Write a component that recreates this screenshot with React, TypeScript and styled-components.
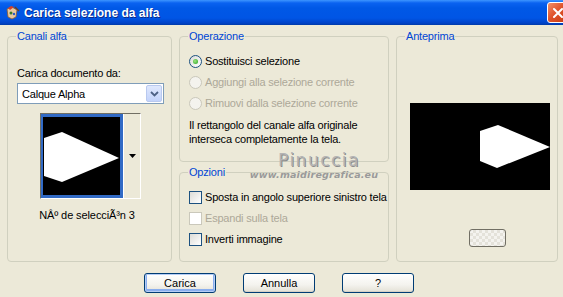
import React from 'react';
import styled, { createGlobalStyle, css } from 'styled-components';

const GlobalStyle = createGlobalStyle`
  html, body {
    margin: 0;
    padding: 0;
    background: #ece9d8;
  }
  body {
    font-family: Tahoma, "Liberation Sans", Arial, sans-serif;
    font-size: 11px;
    color: #000;
  }
`;

const Window = styled.div`
  width: 563px;
  height: 297px;
  display: flex;
  flex-direction: column;
  background: #ece9d8;
  overflow: hidden;
  position: relative;
  white-space: nowrap;
`;

const TitleBar = styled.div`
  height: 25px;
  flex: none;
  display: flex;
  align-items: center;
  padding-left: 4px;
  gap: 4px;
  background: linear-gradient(to bottom, #3d95ff 0px, #0a62f0 3px, #0058e6 8px, #0055e5 18px, #0043c8 23px, #003aa8 25px);
`;

const Title = styled.span`
  flex: 1;
  color: #fff;
  font-family: "Liberation Sans", Arial, sans-serif;
  font-weight: bold;
  font-size: 12px;
  text-shadow: 1px 1px 0 #0a2a8a;
`;

const CloseButton = styled.div`
  width: 21px;
  height: 21px;
  margin-right: -5px;
  box-sizing: border-box;
  border: 1px solid #fff;
  border-radius: 3px;
  background: linear-gradient(to bottom right, #f0906a, #e0542c 45%, #c73a10);
  display: flex;
  align-items: center;
  justify-content: center;
`;

const Body = styled.div`
  display: grid;
  grid-template-columns: 165px 210px 162px;
  column-gap: 7px;
  padding: 5px 0 0 7px;
  align-items: stretch;
`;

const MiddleColumn = styled.div`
  display: flex;
  flex-direction: column;
  gap: 4px;
`;

const Group = styled.fieldset<{ $height: number }>`
  margin: 0;
  padding: 0 8px 0 9px;
  height: ${p => p.$height}px;
  box-sizing: border-box;
  border: 1px solid #d0d0bf;
  border-radius: 4px;
  min-width: 0;
`;

const Legend = styled.legend`
  color: #0046d5;
  padding: 0 1px;
  margin-left: -1px;
  line-height: 13px;
  letter-spacing: -0.2px;
`;

const Label = styled.div`
  margin-top: 24px;
  letter-spacing: -0.2px;
  line-height: 13px;
`;

const Select = styled.div`
  margin-top: 3px;
  height: 21px;
  width: 147px;
  box-sizing: border-box;
  border: 1px solid #7f9db9;
  background: #fff;
  display: flex;
  align-items: center;
  padding: 1px;
`;

const SelectText = styled.span`
  flex: 1;
  padding-left: 3px;
  letter-spacing: -0.2px;
`;

const SelectArrow = styled.div`
  width: 16px;
  height: 17px;
  border-radius: 2px;
  background: linear-gradient(to bottom, #dfe8fd, #c3d3fb);
  border: 1px solid #b9c9ef;
  box-sizing: border-box;
  display: flex;
  align-items: center;
  justify-content: center;
`;

const ThumbWrap = styled.div`
  margin: 9px 0 0 23px;
  width: 101px;
  height: 86px;
  display: flex;
  border: 1px solid #716f64;
  border-right-color: #fff;
  border-bottom-color: #fff;
  box-sizing: border-box;
  background: #fff;
`;

const ThumbFrame = styled.div`
  width: 82px;
  height: 84px;
  box-sizing: border-box;
  border: 3px solid #316ac5;
  border-left-width: 2px;
  background: #000;
  padding: 2px 0 0 1px;
`;

const ThumbDrop = styled.div`
  flex: 1;
  background: #ece9d8;
  border-left: 1px solid #fff;
  display: flex;
  align-items: center;
  justify-content: center;
`;

const Caption = styled.div`
  margin-top: 10px;
  text-align: center;
  letter-spacing: -0.1px;
  padding-right: 6px;
`;

const OptionList = styled.div`
  display: flex;
  flex-direction: column;
  gap: 7px;
  margin-top: 11px;
`;

const Option = styled.div<{ $disabled?: boolean }>`
  display: flex;
  align-items: center;
  gap: 3px;
  height: 14px;
  letter-spacing: -0.2px;
  color: ${p => (p.$disabled ? '#aca899' : '#000')};
`;

const Radio = styled.span<{ $checked?: boolean; $disabled?: boolean }>`
  width: 13px;
  height: 13px;
  flex: none;
  box-sizing: border-box;
  border-radius: 50%;
  border: 1px solid ${p => (p.$disabled ? '#cac8bb' : '#1c5180')};
  background: ${p => (p.$disabled ? '#f4f3ee' : 'linear-gradient(135deg, #dcdcd7, #fff)')};
  display: flex;
  align-items: center;
  justify-content: center;
  ${p =>
    p.$checked &&
    css`
      &::after {
        content: '';
        width: 5px;
        height: 5px;
        border-radius: 50%;
        background: radial-gradient(circle at 40% 40%, #a0e57d, #21a121);
      }
    `}
`;

const Check = styled.span<{ $disabled?: boolean }>`
  width: 13px;
  height: 13px;
  flex: none;
  box-sizing: border-box;
  border: 1px solid ${p => (p.$disabled ? '#cac8bb' : '#1c5180')};
  background: ${p => (p.$disabled ? '#fff' : 'linear-gradient(135deg, #dcdcd7, #fff)')};
`;

const Note = styled.div`
  margin-top: 8px;
  line-height: 14px;
  letter-spacing: -0.2px;
`;

const PreviewBox = styled.div`
  margin: 60px 0 0 4px;
  width: 140px;
  height: 87px;
  background: #000;
`;

const SwatchRow = styled.div`
  display: flex;
  justify-content: center;
  margin-top: 39px;
  padding-left: 20px;
`;

const SwatchButton = styled.div`
  width: 37px;
  height: 18px;
  box-sizing: border-box;
  border: 1px solid #716f64;
  border-radius: 3px;
  background-color: #f4f3ef;
  background-image: linear-gradient(45deg, #e4e2da 25%, transparent 25%, transparent 75%, #e4e2da 75%),
    linear-gradient(45deg, #e4e2da 25%, transparent 25%, transparent 75%, #e4e2da 75%);
  background-size: 6px 6px;
  background-position: 0 0, 3px 3px;
`;

const Footer = styled.div`
  display: flex;
  justify-content: center;
  gap: 27px;
  margin-top: 11px;
  padding-right: 5px;
`;

const Button = styled.button<{ $default?: boolean }>`
  width: 72px;
  height: 20px;
  padding: 0;
  box-sizing: border-box;
  border: 1px solid #003c74;
  border-radius: 3px;
  font-family: inherit;
  font-size: 11px;
  color: #000;
  background: linear-gradient(to bottom, #fff, #f4f3ee 60%, #e3e1d6);
  box-shadow: ${p => (p.$default ? 'inset 0 0 0 1px #b5cdf5, inset 0 -1px 0 2px #8aaeee' : 'inset 0 -1px 0 #d6d0c5')};
`;

const Watermark = styled.div`
  position: absolute;
  left: 244px;
  top: 151px;
  width: 140px;
  display: flex;
  flex-direction: column;
  align-items: center;
  pointer-events: none;
`;

const WatermarkName = styled.span`
  font-family: "DejaVu Sans", sans-serif;
  font-size: 17px;
  letter-spacing: 1.5px;
  line-height: 18px;
  padding-left: 10px;
  color: #b4b4b4;
  text-shadow: 1px 1px 0 #8c8c8c;
`;

const WatermarkUrl = styled.span`
  font-family: "DejaVu Sans", sans-serif;
  font-style: italic;
  font-weight: bold;
  font-size: 9.5px;
  letter-spacing: 0.2px;
  color: #9a9a9a;
`;

const AppIcon = () => (
  <svg width="16" height="16" viewBox="0 0 16 16">
    <path d="M3 4 L8 2 L13 5 L12 12 L8 14 L4 12 Z" fill="#e8c9a0" stroke="#8a5a30" strokeWidth="0.8" />
    <path d="M4 3 L7 1 L10 2 L6 5 Z" fill="#d4402a" />
    <circle cx="7" cy="8" r="1.5" fill="#3a7a2a" />
    <circle cx="10" cy="9" r="1.2" fill="#2a5ac8" />
    <path d="M11 2 L15 6" stroke="#6a4020" strokeWidth="1.2" />
  </svg>
);

const App: React.FC = () => (
  <>
    <GlobalStyle />
    <Window>
      <TitleBar>
        <AppIcon />
        <Title>Carica selezione da alfa</Title>
        <CloseButton>
          <svg width="12" height="12" viewBox="0 0 12 12">
            <path d="M2 2 L10 10 M10 2 L2 10" stroke="#fff" strokeWidth="2" strokeLinecap="round" />
          </svg>
        </CloseButton>
      </TitleBar>
      <Body>
        <Group $height={232}>
          <Legend>Canali alfa</Legend>
          <Label>Carica documento da:</Label>
          <Select>
            <SelectText>Calque Alpha</SelectText>
            <SelectArrow>
              <svg width="9" height="6" viewBox="0 0 9 6">
                <path d="M1 1 L4.5 4.5 L8 1" fill="none" stroke="#4d6185" strokeWidth="1.8" />
              </svg>
            </SelectArrow>
          </Select>
          <ThumbWrap>
            <ThumbFrame>
              <svg width="76" height="77" viewBox="0 0 76 77">
                <path d="M0 19 L18 13 L75 39 L18 63 L0 57 Z" fill="#fff" />
              </svg>
            </ThumbFrame>
            <ThumbDrop>
              <svg width="7" height="4" viewBox="0 0 7 4">
                <path d="M0 0 L7 0 L3.5 4 Z" fill="#000" />
              </svg>
            </ThumbDrop>
          </ThumbWrap>
          <Caption>NÂº de selecciÃ³n 3</Caption>
        </Group>
        <MiddleColumn>
          <Group $height={132}>
            <Legend>Operazione</Legend>
            <OptionList>
              <Option>
                <Radio $checked />
                Sostituisci selezione
              </Option>
              <Option $disabled>
                <Radio $disabled />
                Aggiungi alla selezione corrente
              </Option>
              <Option $disabled>
                <Radio $disabled />
                Rimuovi dalla selezione corrente
              </Option>
            </OptionList>
            <Note>
              Il rettangolo del canale alfa originale
              <br />
              interseca completamente la tela.
            </Note>
          </Group>
          <Group $height={96}>
            <Legend>Opzioni</Legend>
            <OptionList>
              <Option>
                <Check />
                Sposta in angolo superiore sinistro tela
              </Option>
              <Option $disabled>
                <Check $disabled />
                Espandi sulla tela
              </Option>
              <Option>
                <Check />
                Inverti immagine
              </Option>
            </OptionList>
          </Group>
        </MiddleColumn>
        <Group $height={232}>
          <Legend>Anteprima</Legend>
          <PreviewBox>
            <svg width="140" height="87" viewBox="0 0 140 87">
              <path d="M70 28 L88 22 L140 44 L87 65 L70 58 Z" fill="#fff" />
            </svg>
          </PreviewBox>
          <SwatchRow>
            <SwatchButton />
          </SwatchRow>
        </Group>
      </Body>
      <Footer>
        <Button $default>Carica</Button>
        <Button>Annulla</Button>
        <Button>?</Button>
      </Footer>
      <Watermark>
        <WatermarkName>Pinuccia</WatermarkName>
        <WatermarkUrl>www.maidiregrafica.eu</WatermarkUrl>
      </Watermark>
    </Window>
  </>
);

export default App;
